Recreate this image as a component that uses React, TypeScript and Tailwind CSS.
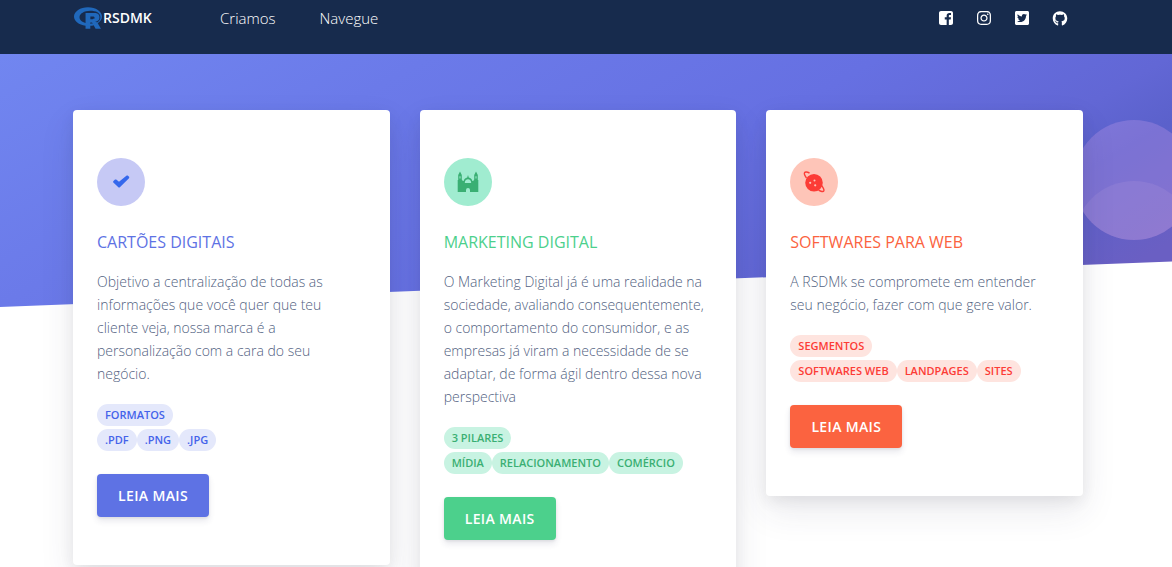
import type { ReactNode } from "react";
import { FaGithub, FaInstagram, FaRProject, FaTwitterSquare } from "react-icons/fa";

function FacebookIcon() {
  return (
    <svg viewBox="0 0 448 512" className="h-4 w-4" fill="currentColor" aria-hidden="true">
      <path d="M384 32c35 0 64 29 64 64v320c0 35-29 64-64 64h-69.3V302.8h60.6l8.7-67.6h-69.3V192c0-19.6 5.4-32.9 33.5-32.9H384V98.7c-6.2-.8-27.4-2.7-52.2-2.7-51.6 0-87 31.5-87 89.4v49.9H184v67.6h60.9V480H64c-35 0-64-29-64-64V96c0-35 29-64 64-64z" />
    </svg>
  );
}

function CheckIcon() {
  return (
    <svg viewBox="0 0 24 24" className="h-6 w-6" fill="currentColor" aria-hidden="true">
      <path d="M4.2 11.2 6 9.5 7.2 9.4 10 11.8 17.7 5.6 18.7 5.4 20.3 7.1 20 8.2 10.6 17.4 9.6 17.6 4.1 12.2Z" />
    </svg>
  );
}

function PalaceIcon() {
  return (
    <svg viewBox="0 0 24 24" className="h-6 w-6" fill="currentColor" aria-hidden="true">
      <path
        fillRule="evenodd"
        d="M4 1.5 5.8 5V9.5L6.8 11H7.6C8 9.4 9.3 8 11.2 7.5L12 5 12.8 7.5C14.7 8 16 9.4 16.4 11H17.2L18.2 9.5V5L20 1.5 21.8 5V10H22.3V22H14V20A2 2 0 0 0 10 20V22H1.7V10H2.2V5ZM8.8 13H15.2C15.2 10.6 13.8 9.3 12 9.3S8.8 10.6 8.8 13ZM3.5 6.2V8.4H4.5V6.2ZM19.5 6.2V8.4H20.5V6.2Z"
      />
    </svg>
  );
}

function PlanetIcon() {
  return (
    <svg viewBox="0 0 24 24" className="h-6 w-6" aria-hidden="true">
      <path
        d="M7.5 3C5 1.8 3 1.7 2.5 2.8 2.1 3.8 2.8 5.8 4.5 8M19.5 15.5C21.5 18 22.3 20 21.8 21 21.3 22 19 21.6 16.5 20.2"
        fill="none"
        stroke="currentColor"
        strokeWidth="1.4"
      />
      <path
        fill="currentColor"
        fillRule="evenodd"
        d="M12 4a8.8 8.8 0 1 0 0 17.6a8.8 8.8 0 1 0 0-17.6ZM12.5 9.4a1 1 0 1 1 0 2a1 1 0 1 1 0-2ZM8.2 11.7a1.1 1.1 0 1 1 0 2.2a1.1 1.1 0 1 1 0-2.2ZM13.2 14.2a1.1 1.1 0 1 1 0 2.2a1.1 1.1 0 1 1 0-2.2Z"
      />
    </svg>
  );
}

type Service = {
  title: string;
  text: string;
  heading: string;
  tags: string[];
  icon: ReactNode;
  iconStyle: string;
  titleStyle: string;
  tagStyle: string;
  buttonStyle: string;
};

const services: Service[] = [
  {
    title: "Cartões Digitais",
    text: "Objetivo a centralização de todas as informações que você quer que teu cliente veja, nossa marca é a personalização com a cara do seu negócio.",
    heading: "Formatos",
    tags: [".PDF", ".PNG", ".JPG"],
    icon: <CheckIcon />,
    iconStyle: "bg-[#c6c9f5] text-[#3568ec]",
    titleStyle: "text-[#5e72e4]",
    tagStyle: "bg-[#e4e8fb] text-[#4463ea]",
    buttonStyle: "bg-[#5e72e4]",
  },
  {
    title: "Marketing Digital",
    text: "O Marketing Digital já é uma realidade na sociedade, avaliando consequentemente, o comportamento do consumidor, e as empresas já viram a necessidade de se adaptar, de forma ágil dentro dessa nova perspectiva",
    heading: "3 Pilares",
    tags: ["Mídia", "Relacionamento", "Comércio"],
    icon: <PalaceIcon />,
    iconStyle: "bg-[#a0ecd0] text-[#3aaf73]",
    titleStyle: "text-[#4cd08c]",
    tagStyle: "bg-[#c8f3e2] text-[#3aaf73]",
    buttonStyle: "bg-[#4cd08c]",
  },
  {
    title: "Softwares para Web",
    text: "A RSDMk se compromete em entender seu negócio, fazer com que gere valor.",
    heading: "Segmentos",
    tags: ["Softwares web", "Landpages", "Sites"],
    icon: <PlanetIcon />,
    iconStyle: "bg-[#fec5b8] text-[#fc3c36]",
    titleStyle: "text-[#fb6340]",
    tagStyle: "bg-[#fee4df] text-[#fc3c36]",
    buttonStyle: "bg-[#fb6340]",
  },
];

function Tag({ label, className }: { label: string; className: string }) {
  return (
    <span className={`h-[22px] rounded-full px-2 text-[11px] leading-[22px] font-semibold uppercase ${className}`}>
      {label}
    </span>
  );
}

function ServiceCard({ service }: { service: Service }) {
  return (
    <article className="rounded bg-white px-6 py-12 shadow-[0_15px_35px_rgba(50,50,93,0.1),0_5px_15px_rgba(0,0,0,0.07)]">
      <div className={`flex h-12 w-12 items-center justify-center rounded-full ${service.iconStyle}`}>
        {service.icon}
      </div>
      <h2 className={`mt-6 text-base leading-6 uppercase ${service.titleStyle}`}>{service.title}</h2>
      <p className="mt-4 text-[14px] leading-[23px] font-light text-[#525f7f]">{service.text}</p>
      <div className="mt-[19px] flex flex-col items-start gap-[3px]">
        <Tag label={service.heading} className={service.tagStyle} />
        <div className="flex">
          {service.tags.map((tag) => (
            <Tag key={tag} label={tag} className={service.tagStyle} />
          ))}
        </div>
      </div>
      <a
        href="#"
        className={`mt-[23px] inline-flex h-[43px] w-28 items-center justify-center rounded text-sm font-semibold tracking-wide text-white uppercase shadow-[0_4px_6px_rgba(50,50,93,0.11),0_1px_3px_rgba(0,0,0,0.08)] ${service.buttonStyle}`}
      >
        Leia mais
      </a>
    </article>
  );
}

const socials = [
  { name: "Facebook", icon: <FacebookIcon /> },
  { name: "Instagram", icon: <FaInstagram className="h-4 w-4" /> },
  { name: "Twitter", icon: <FaTwitterSquare className="h-4 w-4" /> },
  { name: "GitHub", icon: <FaGithub className="h-[15px] w-4" /> },
];

export default function App() {
  return (
    <div className="h-screen overflow-hidden bg-white font-['Open_Sans',sans-serif]">
      <header className="h-[54px] bg-[#172b4d] pr-4">
        <nav className="mx-auto flex h-9 max-w-[1010px] items-center text-white">
          <a href="#" className="flex w-[147px] items-center pl-px text-sm font-semibold">
            <FaRProject className="mr-px h-7 w-7 text-[#2068bb]" aria-hidden="true" />
            RSDMK
          </a>
          <a href="#" className="mr-11 text-[15px] font-light">Criamos</a>
          <a href="#" className="text-[15px] font-light">Navegue</a>
          <div className="mr-[15px] ml-auto flex gap-[22px]">
            {socials.map((social) => (
              <a key={social.name} href="#" aria-label={social.name} className="flex w-4 items-center justify-center">
                {social.icon}
              </a>
            ))}
          </div>
        </nav>
      </header>
      <main className="relative pt-14 pr-4">
        <div
          aria-hidden="true"
          className="absolute inset-x-0 top-0 h-[253px] overflow-hidden bg-[linear-gradient(150deg,#7186f0_0%,#6b7ae9_27%,#6670e2_55%,#6267d5_73%,#5b61cb_80%,#6a5fc3_93%)] [clip-path:polygon(0_0,100%_0,100%_82%,0_100%)]"
        >
          <div className="absolute top-[66px] -right-[22px] h-[120px] w-[120px] overflow-hidden rounded-full bg-[#dba7f0]/25">
            <div className="mt-[61px] h-[120px] w-[120px] rounded-full bg-[#f0c8f0]/10" />
          </div>
        </div>
        <div className="relative mx-auto grid max-w-[1010px] grid-cols-3 items-start gap-[30px]">
          {services.map((service) => (
            <ServiceCard key={service.title} service={service} />
          ))}
        </div>
      </main>
    </div>
  );
}
